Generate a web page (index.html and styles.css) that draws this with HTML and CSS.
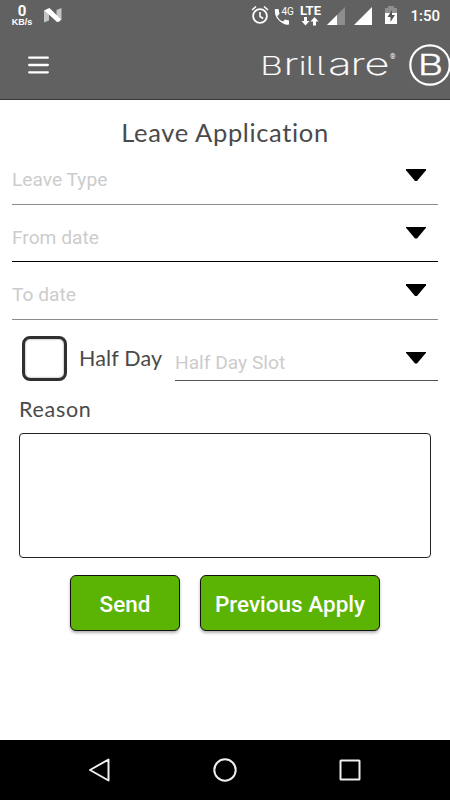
FILE: index.html
```html
<!doctype html>
<html lang="en">
<head>
    <meta charset="UTF-8">
    <meta name="viewport" content="width=device-width, initial-scale=1.0">
    <title>Leave Application</title>
    <link rel="stylesheet" href="styles.css">
</head>
<body>
<div class="screen">
    <div class="status-bar">
        <div class="speed">
            <span class="speed-value">0</span>
            <span class="speed-unit">KB/s</span>
        </div>
        <svg class="n-icon" width="20" height="16" viewBox="0 0 20 16">
            <path d="M1 2v12.500l5-2V3zM18.500 0v12.500l-5-3V2z" fill="#c4c4c4"/>
            <path d="M1.500 2.500Q4 .5 6.500 0L18 11.500Q17 14 14 14z" fill="#fff"/>
        </svg>
        <div class="status-icons">
            <svg class="alarm" width="18" height="20" viewBox="0 0 18 20" fill="none" stroke="#fff">
                <circle cx="9" cy="11" r="6.900" stroke-width="1.800"/>
                <path d="M9 7v4.500l3.200 2M1 5l4-3.500M17 5l-4-3.500" stroke-width="1.600"/>
            </svg>
            <div class="call">
                <svg width="16" height="16" viewBox="0 0 16 16">
                    <path d="M1 0h3.500l1 5-2.300 2.200q2 4 5.800 5.300l2-2 4 1v4Q10 16.500 5 11.500T1 0z" fill="#fff"/>
                </svg>
                <span class="call-net">4G</span>
            </div>
            <div class="lte">
                <span>LTE</span>
                <svg width="18" height="9" viewBox="0 0 18 9" fill="#fff">
                    <path d="M3 0h3v4h2.500l-4 4.500L.500 4H3zM12 8.500h3v-4h2.500L13.500 0l-4 4.500H12z"/>
                </svg>
            </div>
            <svg class="signal" width="18" height="18" viewBox="0 0 18 18">
                <path d="M18 0v18H0z" fill="#8e8e8e"/>
                <path d="M10 8v10H0z" fill="#fff"/>
            </svg>
            <svg class="signal-full" width="18" height="18" viewBox="0 0 18 18">
                <path d="M18 0v18H0z" fill="#fff"/>
            </svg>
            <svg class="battery" width="12" height="18" viewBox="0 0 12 18">
                <path d="M3 0h6v2h3v5H0V2h3z" fill="#8e8e8e"/>
                <path d="M0 7h12v11H0z" fill="#fff"/>
                <path d="M7 4L2.500 11h3v5L10 9H7z" fill="#555"/>
            </svg>
            <span class="clock">1:50</span>
        </div>
    </div>
    <div class="toolbar">
        <svg class="menu" width="21" height="18" viewBox="0 0 21 18">
            <path d="M1.200 1.700h18.600M1.200 9h18.600M1.200 16.300h18.600" stroke="#fff" stroke-width="2.300" stroke-linecap="round"/>
        </svg>
        <svg class="brand" width="136" height="34" viewBox="0 -4 136 34">
            <text class="brand-text" transform="scale(1.4 1)" y="20.500"><tspan class="tall" x="-.5">B</tspan><tspan class="low" x="16">r</tspan><tspan class="tall" x="27 32 39.500">ill</tspan><tspan class="low" x="48 64 74">are</tspan></text>
            <text class="reg" x="129" y="5">®</text>
        </svg>
        <svg class="badge" width="42" height="42" viewBox="0 0 42 42">
            <circle cx="21" cy="21" r="19.700" fill="none" stroke="#fff" stroke-width="2.200"/>
            <text class="badge-text" transform="scale(1.350 1)" x="15.900" y="31.500" text-anchor="middle">B</text>
        </svg>
    </div>
    <form class="form">
        <h1 class="title">Leave Application</h1>
        <div class="field">
            <span>Leave Type</span>
            <i class="arrow"></i>
        </div>
        <div class="field dark">
            <span>From date</span>
            <i class="arrow"></i>
        </div>
        <div class="field">
            <span>To date</span>
            <i class="arrow"></i>
        </div>
        <div class="half-row">
            <div class="checkbox"></div>
            <span class="half-label">Half Day</span>
            <div class="field slot">
                <span>Half Day Slot</span>
                <i class="arrow"></i>
            </div>
        </div>
        <label class="reason-label" for="reason">Reason</label>
        <textarea class="reason" id="reason"></textarea>
        <div class="buttons">
            <button type="button" class="button send">Send</button>
            <button type="button" class="button previous">Previous Apply</button>
        </div>
    </form>
    <div class="nav-bar">
        <svg width="24" height="24" viewBox="0 0 24 24">
            <path d="M20.500 1.500v21L2 12z"/>
        </svg>
        <svg width="24" height="24" viewBox="0 0 24 24">
            <circle cx="12" cy="12" r="10.700"/>
        </svg>
        <svg width="24" height="24" viewBox="0 0 24 24">
            <rect x="2.500" y="2.500" width="19" height="19" rx=".5"/>
        </svg>
    </div>
</div>
</body>
</html>
```
FILE: styles.css
```css
*
{
    box-sizing: border-box;
}
body
{
    margin: 0;
    background-color: #ffffff;
    font-family: Roboto, sans-serif;
}
svg
{
    display: block;
    flex: none;
}
.screen
{
    display: flex;
    flex-direction: column;
    width: 450px;
    height: 800px;
    overflow: hidden;
}

/* status bar */
.status-bar
{
    display: flex;
    height: 32px;
    padding-left: 11px;
    background-color: #616161;
    color: #ffffff;
}
.speed
{
    display: flex;
    flex-direction: column;
    align-items: center;
    width: 22px;
    padding-top: 4px;
    font-weight: 700;
}
.speed-value
{
    font-size: 15px;
    line-height: 14px;
}
.speed-unit
{
    font-family: "Liberation Sans", sans-serif;
    font-size: 9px;
    line-height: 9px;
}
.n-icon
{
    margin: 8px 0 0 10px;
}
.status-icons
{
    display: flex;
    align-items: flex-start;
    margin-left: auto;
    padding-right: 10px;
}
.alarm
{
    margin-top: 5px;
}
.call
{
    display: flex;
    width: 20px;
    margin: 7px 0 0 5px;
}
.call svg
{
    margin: 2px -9px 0 0;
}
.call-net
{
    font-size: 10px;
    line-height: 10px;
}
.lte
{
    display: flex;
    flex-direction: column;
    align-items: center;
    width: 24px;
    margin: 5px 0 0 4px;
    font-size: 13px;
    font-weight: 700;
    line-height: 12px;
}
.signal
{
    margin: 7px 0 0 5px;
}
.signal-full
{
    margin: 7px 0 0 9px;
}
.battery
{
    margin: 6px 0 0 13px;
}
.clock
{
    margin: 7px 0 0 13px;
    font-size: 15px;
    font-weight: 500;
    line-height: 18px;
}

/* toolbar */
.toolbar
{
    display: flex;
    height: 68px;
    padding: 12px 0 0 28px;
    background-color: #616161;
    border-bottom: 1px solid #373737;
}
.menu
{
    margin-top: 12px;
}
.brand
{
    margin: 6px 0 0 auto;
    overflow: visible;
}
.brand-text
{
    fill: #ffffff;
    stroke: #ffffff;
    stroke-width: 0.200px;
    font-family: Inter, sans-serif;
    font-weight: 200;
    font-feature-settings: "cv05";
}
.tall
{
    font-size: 25px;
}
.low
{
    font-size: 31px;
}
.reg
{
    fill: #ffffff;
    font-size: 7px;
}
.badge
{
    margin: 0 -1px 0 12px;
}
.badge-text
{
    fill: #ffffff;
    stroke: #ffffff;
    stroke-width: 0.300px;
    font-family: Inter, sans-serif;
    font-size: 29px;
    font-weight: 300;
}

/* form */
.form
{
    flex: 1;
    padding: 0 12px;
}
.title
{
    margin: 15px 0 0;
    height: 32px;
    color: #4a4a4a;
    font-family: Lato, sans-serif;
    font-size: 25.500px;
    font-weight: 400;
    letter-spacing: 0.650px;
    line-height: 34px;
    text-align: center;
    white-space: nowrap;
}
.field
{
    display: flex;
    justify-content: space-between;
    height: 57.500px;
    padding: 22px 12px 0 0;
    border-bottom: 1px solid #8c8c8c;
    color: #cccccc;
    font-size: 19.200px;
    line-height: 22px;
}
.field.dark
{
    border-color: #000000;
}
.arrow
{
    width: 20px;
    height: 12px;
    background-color: #000000;
    clip-path: polygon(0 0, 100% 0, 100% 10%, 55% 100%, 45% 100%, 0 10%);
}
.half-row
{
    display: flex;
    height: 61px;
    padding-left: 10px;
}
.checkbox
{
    width: 45px;
    height: 45px;
    margin-top: 16px;
    border: 3px solid #303030;
    border-radius: 8px;
    box-shadow: inset 0 0 2px #777777;
}
.half-label
{
    width: 108px;
    padding: 21px 0 0 12px;
    color: #4a4a4a;
    font-family: Lato, sans-serif;
    font-size: 21.500px;
    letter-spacing: 0.150px;
    line-height: 34px;
    white-space: nowrap;
}
.slot
{
    flex: 1;
    height: 61px;
    padding-top: 32px;
    border-color: #555555;
}
.reason-label
{
    display: block;
    height: 52px;
    padding: 10px 0 0 7px;
    color: #4a4a4a;
    font-family: Lato, sans-serif;
    font-size: 21.500px;
    letter-spacing: 0.700px;
    line-height: 36px;
}
.reason
{
    display: block;
    width: 412px;
    height: 125px;
    margin: 0 7px;
    border: 1px solid #222222;
    border-radius: 4px;
    outline: none;
    resize: none;
}
.buttons
{
    display: flex;
    justify-content: center;
    gap: 20px;
    padding-top: 17px;
}
.button
{
    height: 56px;
    padding: 2px 0 0;
    border: 1px solid #111111;
    border-radius: 6px;
    background-color: #5bb404;
    box-shadow: 0 2px 3px rgba(0, 0, 0, 0.3);
    color: #ffffff;
    font-family: Roboto, sans-serif;
    font-size: 22.500px;
    font-weight: 500;
}
.send
{
    width: 110px;
}
.previous
{
    width: 180px;
}

/* system navigation */
.nav-bar
{
    display: flex;
    justify-content: space-between;
    align-items: center;
    height: 60px;
    padding: 0 88px;
    background-color: #000000;
}
.nav-bar svg
{
    fill: none;
    stroke: #eeeeee;
    stroke-width: 2;
    stroke-linejoin: round;
}
```
